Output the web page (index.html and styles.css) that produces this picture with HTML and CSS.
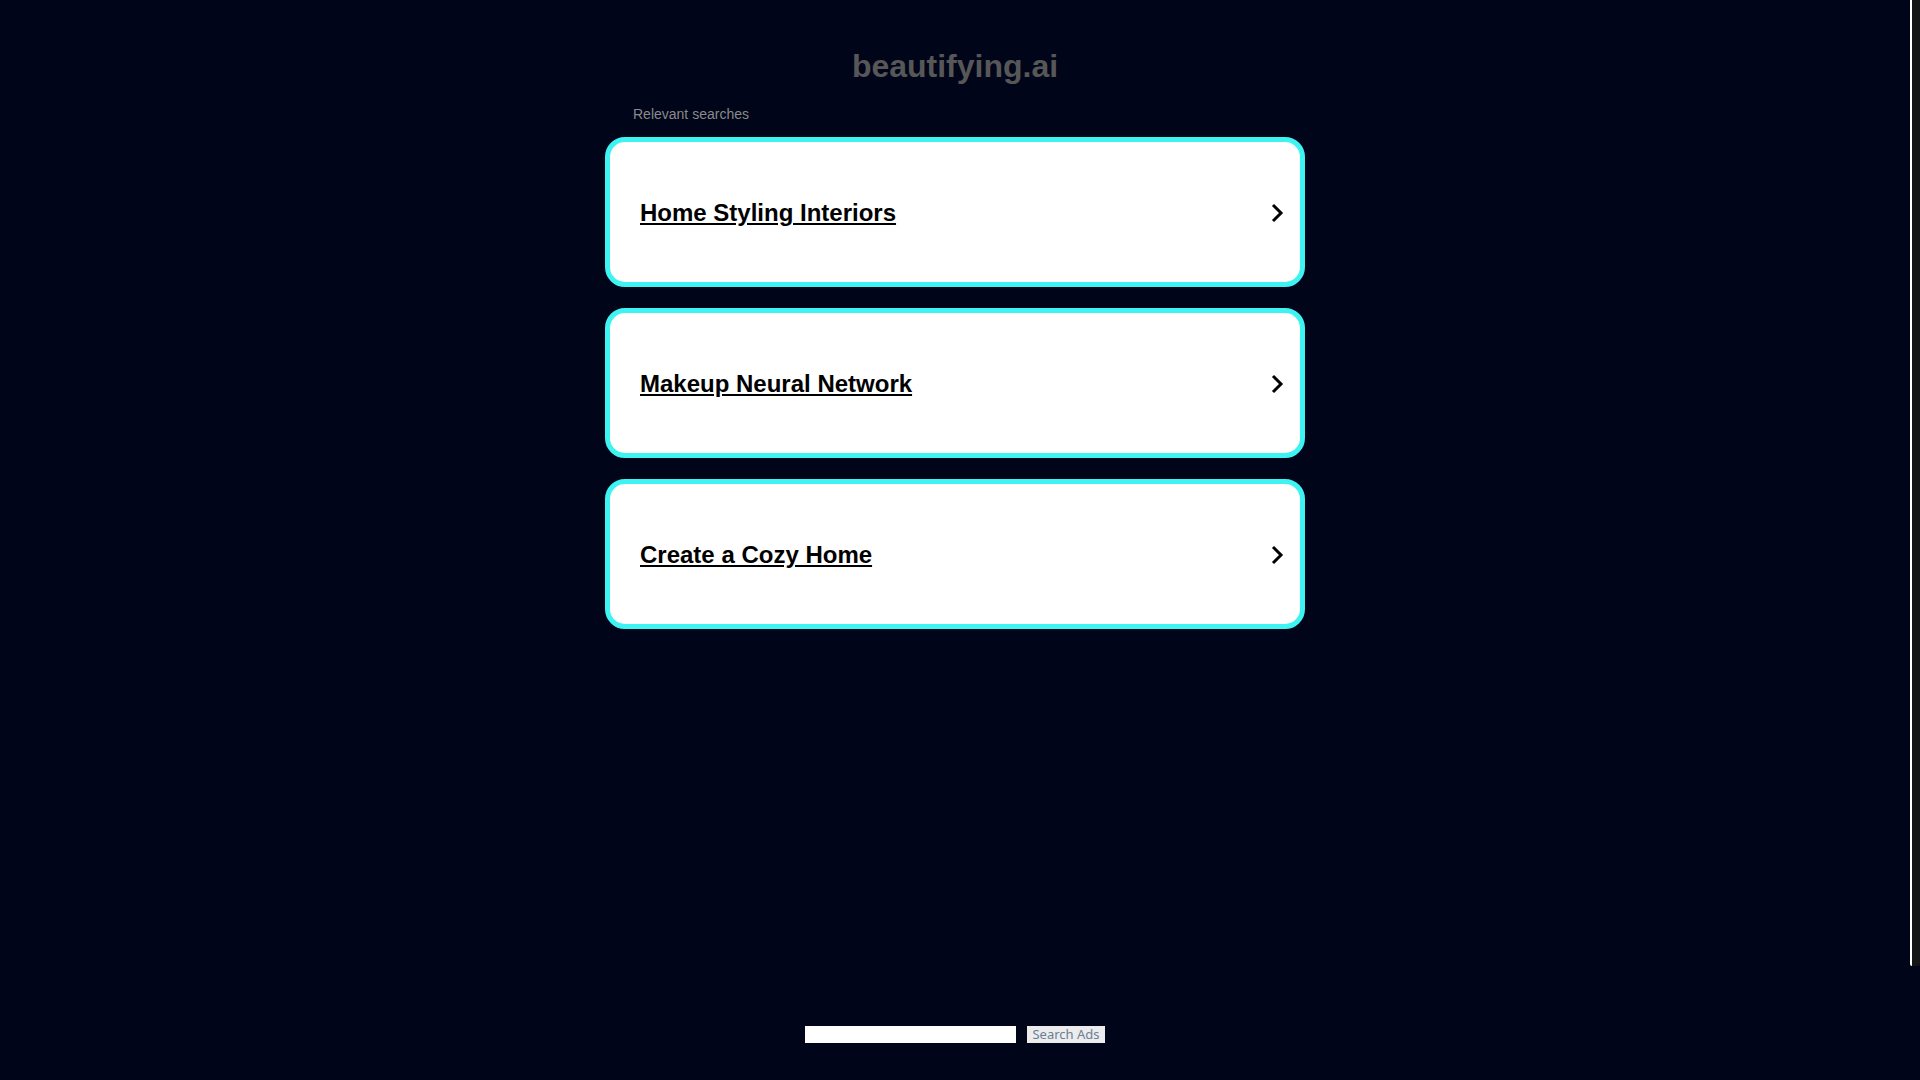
FILE: index.html
```html
<!DOCTYPE html>
<html lang="en">
<head>
<meta charset="utf-8">
<title>beautifying.ai</title>
<link rel="stylesheet" href="styles.css">
</head>
<body>
<div class="page">
  <h1 class="domain">beautifying.ai</h1>
  <div class="container">
    <div class="label">Relevant searches</div>
    <ul class="results">
      <li><a class="card" href="#"><span class="term">Home Styling Interiors</span><svg class="chev" viewBox="0 0 14 22" width="14" height="22"><polyline points="3,3 11,11 3,19" fill="none" stroke="#000" stroke-width="3"/></svg></a></li>
      <li><a class="card" href="#"><span class="term">Makeup Neural Network</span><svg class="chev" viewBox="0 0 14 22" width="14" height="22"><polyline points="3,3 11,11 3,19" fill="none" stroke="#000" stroke-width="3"/></svg></a></li>
      <li><a class="card" href="#"><span class="term">Create a Cozy Home</span><svg class="chev" viewBox="0 0 14 22" width="14" height="22"><polyline points="3,3 11,11 3,19" fill="none" stroke="#000" stroke-width="3"/></svg></a></li>
    </ul>
  </div>
  <form class="search" onsubmit="return false;">
    <input class="search-input" type="text">
    <button class="search-btn" type="submit">Search Ads</button>
  </form>
</div>
<div class="scrollbar"><div class="thumb"></div></div>
</body>
</html>
```

FILE: styles.css
```css
html {
  background: #00051a;
}
body {
  margin: 0;
  background: #00051a;
  font-family: "Liberation Sans", Arial, sans-serif;
}
.page {
  width: calc(100% - 10px);
  display: flex;
  flex-direction: column;
  align-items: center;
}
.domain {
  margin: 0;
  padding-top: 48px;
  font-size: 32px;
  line-height: 36px;
  font-weight: bold;
  color: #575757;
  text-align: center;
}
.container {
  width: 700px;
  margin-top: 22px;
}
.label {
  font-size: 14px;
  line-height: 16px;
  color: #8a8a8a;
  padding-left: 28px;
}
.results {
  list-style: none;
  margin: 15px 0 0;
  padding: 0;
  display: flex;
  flex-direction: column;
  gap: 21px;
}
.card {
  display: flex;
  align-items: center;
  box-sizing: border-box;
  height: 150px;
  padding: 2px 16px 0 30px;
  background: #ffffff;
  border: 5px solid #3ef4f2;
  border-radius: 20px;
  color: #000;
  text-decoration: none;
}
.term {
  font-size: 24px;
  line-height: 30px;
  font-weight: bold;
  text-decoration: underline;
  color: #000;
}
.chev {
  margin-left: auto;
  display: block;
}
.search {
  margin-top: 397px;
  display: flex;
  align-items: center;
  gap: 11px;
}
.search-input {
  box-sizing: border-box;
  width: 211px;
  height: 17px;
  margin: 0;
  padding: 0 4px;
  border: 1px solid #ffffff;
  background: #ffffff;
  outline: none;
}
.search-btn {
  box-sizing: border-box;
  width: 78px;
  height: 17px;
  margin: 0;
  padding: 0;
  border: 1px solid #ececec;
  background: #ececec;
  color: #6a7f96;
  font-family: "Noto Sans", "Open Sans", sans-serif;
  font-size: 13px;
  line-height: 15px;
}
.scrollbar {
  position: fixed;
  top: 0;
  right: 0;
  width: 10px;
  height: 100vh;
  background: #00051a;
}
.thumb {
  box-sizing: border-box;
  height: 966px;
  border-left: 2px solid #ffffff;
  background: #151515;
  border-radius: 0 0 2px 2px;
}
```
